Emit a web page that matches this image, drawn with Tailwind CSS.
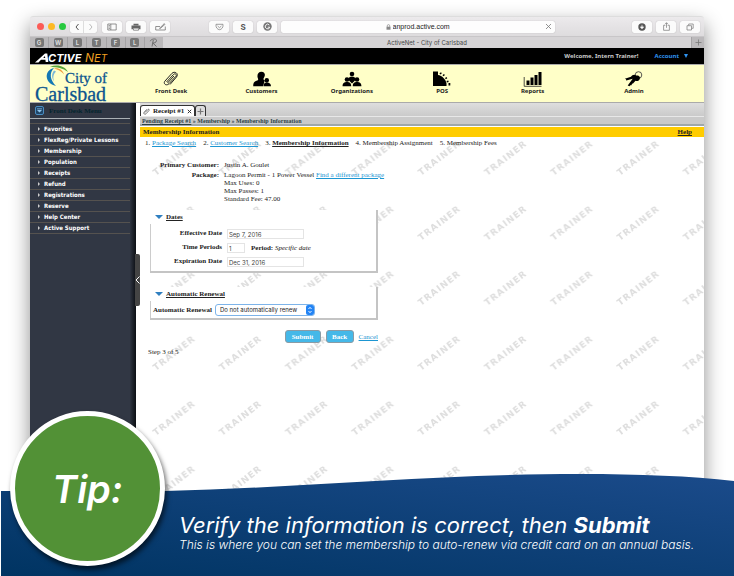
<!DOCTYPE html>
<html lang="en">
<head>
<meta charset="utf-8">
<meta name="viewport" content="width=device-width, initial-scale=1">
<title>ActiveNet - City of Carlsbad</title>
<script src="https://cdn.jsdelivr.net/npm/@tailwindcss/browser@4"></script>
</head>
<body class="bg-white">
<div class="relative flex min-h-screen flex-col overflow-hidden px-[30px] pt-4 font-['Liberation_Serif',serif] text-[7px] leading-[8px] text-[#222]">

  <!-- Browser window -->
  <div class="flex flex-1 flex-col rounded-t-[3px] bg-white shadow-[0_8px_20px_rgba(0,0,0,0.45)]">

    <!-- Toolbar -->
    <div class="flex h-5 items-center rounded-t-[3px] border-t border-[#ddd] bg-linear-to-b from-[#eceaec] to-[#dedcde] pr-1 pl-[7px] font-['Inter',sans-serif] text-[#555]">
      <div class="flex gap-1">
        <span class="size-[7px] rounded-full bg-[#fc5b57]"></span>
        <span class="size-[7px] rounded-full bg-[#fdb924]"></span>
        <span class="size-[7px] rounded-full bg-[#27c93f]"></span>
      </div>
      <div class="ml-1 flex h-3 w-[27px] shrink-0 divide-x divide-[#ddd] rounded-[2px] bg-[#fbfbfb] shadow-[0_0_1px_rgba(0,0,0,0.3)]">
        <button aria-label="Back" class="flex flex-1 items-center justify-center"><svg class="h-2 w-1" viewBox="0 0 4 8" fill="none" stroke="#555"><path d="M3.500 1 1 4l2.500 3"/></svg></button>
        <button aria-label="Forward" class="flex flex-1 items-center justify-center"><svg class="h-2 w-1" viewBox="0 0 4 8" fill="none" stroke="#bbb"><path d="M.5 1 3 4 .5 7"/></svg></button>
      </div>
      <button aria-label="Sidebar" class="ml-[5px] flex h-3 w-5 shrink-0 items-center justify-center rounded-[2px] bg-[#fbfbfb] shadow-[0_0_1px_rgba(0,0,0,0.3)]"><svg class="h-2 w-[10px]" viewBox="0 0 10 8" fill="none" stroke="#666" stroke-width=".7"><path d="M.8 1h8.400v6H.8zM3.800 1v6M1.700 2.500h1.200M1.700 4h1.200M1.700 5.500h1.200"/></svg></button>
      <button aria-label="Print" class="ml-1 flex h-3 w-5 shrink-0 items-center justify-center rounded-[2px] bg-[#fbfbfb] shadow-[0_0_1px_rgba(0,0,0,0.3)]"><svg class="h-2 w-[10px]" viewBox="0 0 10 8"><path d="M2.500.8h5v1.400h-5zM.5 2.600h9v3.600H8V5H2v1.200H.5z" fill="#666"/><path d="M2.500 5.200h5v2h-5z" fill="none" stroke="#666" stroke-width=".7"/></svg></button>
      <button aria-label="Sign" class="ml-1 flex h-3 w-5 shrink-0 items-center justify-center rounded-[2px] bg-[#fbfbfb] shadow-[0_0_1px_rgba(0,0,0,0.3)]"><svg class="h-2 w-[11px]" viewBox="0 0 11 8" fill="none" stroke="#666" stroke-width=".7"><path d="M5 3.500H.7v3.500h9.600V3.500M4.500 5.300 9.300.6l.7.7L5.200 5.600z"/></svg></button>
      <button aria-label="Pocket" class="ml-[39px] flex h-3 w-5 shrink-0 items-center justify-center rounded-[2px] bg-[#fbfbfb] shadow-[0_0_1px_rgba(0,0,0,0.3)]"><svg class="h-2 w-[9px]" viewBox="0 0 9 8" fill="none" stroke="#777" stroke-width=".7"><path d="M1 1.300h7c.5 3-1.500 5.400-3.500 5.400S.5 4.300 1 1.300zM2.600 3l1.900 1.700L6.400 3"/></svg></button>
      <button class="ml-1 h-3 w-5 shrink-0 rounded-[2px] bg-[#fbfbfb] text-[8px] leading-3 font-bold shadow-[0_0_1px_rgba(0,0,0,0.3)]">S</button>
      <button aria-label="Grammar" class="ml-1 flex h-3 w-5 shrink-0 items-center justify-center rounded-[2px] bg-[#fbfbfb] shadow-[0_0_1px_rgba(0,0,0,0.3)]"><svg class="size-[9px]" viewBox="0 0 9 9"><circle cx="4.500" cy="4.500" r="4.200" fill="#777"/><path d="M6.300 3a2.300 2.300 0 1 0 .5 2.200H4.800" fill="none" stroke="#fff" stroke-width=".9"/></svg></button>
      <label class="ml-1 flex h-3 min-w-0 flex-1 items-center rounded-[2px] bg-[#fdfdfd] pr-[3px] shadow-[0_0_1px_rgba(0,0,0,0.3)]">
        <span class="flex flex-1 items-center justify-center gap-[2px] pl-3">
          <svg class="h-[6px] w-[5px] shrink-0" viewBox="0 0 5 6"><path d="M.5 2.700h4V5.700h-4z" fill="#888"/><path d="M1.300 2.900V1.800a1.200 1.200 0 0 1 2.400 0v1.100" fill="none" stroke="#888" stroke-width=".7"/></svg>
          <input aria-label="Address" value="anprod.active.com" class="w-[60px] bg-transparent p-0 font-['Liberation_Sans',sans-serif] text-[7px] leading-3 text-[#222]">
        </span>
        <svg class="size-[7px]" viewBox="0 0 7 7" stroke="#777" stroke-width=".8"><path d="m1 1 5 5M6 1 1 6"/></svg>
      </label>
      <button aria-label="Downloads" class="ml-[77px] flex h-3 w-5 shrink-0 items-center justify-center rounded-[2px] bg-[#fbfbfb] shadow-[0_0_1px_rgba(0,0,0,0.3)]"><svg class="size-2" viewBox="0 0 8 8"><circle cx="4" cy="4" r="3.700" fill="#555"/><path d="M4 1.800v3M2.400 3.900 4 5.800l1.600-1.900z" fill="#fff" stroke="#fff" stroke-width=".7"/></svg></button>
      <button aria-label="Share" class="ml-1 flex h-3 w-5 shrink-0 items-center justify-center rounded-[2px] bg-[#fbfbfb] shadow-[0_0_1px_rgba(0,0,0,0.3)]"><svg class="size-[9px]" viewBox="0 0 9 9" fill="none" stroke="#777" stroke-width=".7"><path d="M3.300 3.300H1.600v5h5.800v-5H5.700M4.500 5.800V.8M3 2.200 4.500.7 6 2.200"/></svg></button>
      <button aria-label="Show tabs" class="ml-1 flex h-3 w-5 shrink-0 items-center justify-center rounded-[2px] bg-[#fbfbfb] shadow-[0_0_1px_rgba(0,0,0,0.3)]"><svg class="size-2" viewBox="0 0 8 8" fill="none" stroke="#777" stroke-width=".7"><path d="M1 2.700h4.500v4.300H1zM2.700 2.500V1h4.500v4.300H5.700"/></svg></button>
    </div>

    <!-- Tab strip -->
    <div class="flex h-3 border-t border-[#c8c6c8] bg-[#d6d4d6] font-['Inter',sans-serif] text-[6px] leading-[11px] text-[#444]">
      <div class="flex w-[133px] divide-x divide-[#a5a3a5] bg-[#bbb9bb]">
        <button class="flex flex-1 items-center justify-center"><span class="size-[9px] rounded-[2px] bg-[#777] leading-[9px] font-bold text-[#ddd]">G</span></button>
        <button class="flex flex-1 items-center justify-center"><span class="size-[9px] rounded-[2px] bg-[#777] leading-[9px] font-bold text-[#ddd]">W</span></button>
        <button class="flex flex-1 items-center justify-center"><span class="size-[9px] rounded-[2px] bg-[#777] leading-[9px] font-bold text-[#ddd]">L</span></button>
        <button class="flex flex-1 items-center justify-center"><span class="size-[9px] rounded-[2px] bg-[#777] leading-[9px] font-bold text-[#ddd]">T</span></button>
        <button class="flex flex-1 items-center justify-center"><span class="size-[9px] rounded-[2px] bg-[#777] leading-[9px] font-bold text-[#ddd]">F</span></button>
        <button class="flex flex-1 items-center justify-center"><span class="size-[9px] rounded-[2px] bg-[#777] leading-[9px] font-bold text-[#ddd]">L</span></button>
        <button aria-label="R" class="flex flex-1 items-center justify-center"><svg class="size-[9px]" viewBox="0 0 9 9" fill="none" stroke="#666" stroke-width=".9"><path d="M1.200 3.200C2 .8 7.500 0 7.500 2.500S4.500 5 3.800 5L7.500 8.500M4.300 2 3 8.500"/></svg></button>
      </div>
      <div class="flex-1 pl-[53px] text-center">ActiveNet - City of Carlsbad</div>
      <button aria-label="New tab" class="ml-[53px] flex w-[13px] items-center justify-center border-l border-[#a5a3a5] bg-[#bbb9bb]"><svg class="size-[7px]" viewBox="0 0 7 7" stroke="#777" stroke-width=".8"><path d="M3.500.5v6M.5 3.500h6"/></svg></button>
    </div>

    <!-- Brand bar -->
    <div class="flex h-[17px] items-center border-b border-[#aaa] bg-black pr-4 font-['Noto_Sans',sans-serif] text-[6px] font-bold text-[#ccc]">
      <svg class="ml-[5px] h-4 w-[78px]" viewBox="0 0 78 16" role="img" aria-label="ActiveNet">
        <path d="M0 14.500 10 5.500h2.300l1 8.500h-2.600l-.3-2.200H6L3.500 14.500zM8.200 10h2l-.3-2z" fill="#fff" fill-rule="evenodd"/>
        <text x="13" y="14" fill="#fff" font-family="Inter, sans-serif" font-weight="700" font-style="italic" font-size="11">CTIVE</text>
        <text x="50" y="14" fill="#f0a020" font-family="Inter, sans-serif" font-weight="400" font-style="italic" font-size="12">N<tspan font-size="11">E</tspan><tspan font-size="10">T</tspan></text>
      </svg>
      <span class="ml-auto">Welcome, Intern Trainer!</span>
      <a href="#" class="ml-4 flex items-center gap-[5px] text-[#2f93f0]">Account <svg class="size-1" viewBox="0 0 4 4" fill="#2f93f0"><path d="M0 0h4L2 4z"/></svg></a>
    </div>

    <!-- Main navigation -->
    <div class="flex h-[37px] bg-[#ffffc8]">
      <svg class="h-[37px] w-24 shrink-0 overflow-visible" viewBox="0 0 96 37" role="img" aria-label="City of Carlsbad">
        <path d="M24 3C14 5 14 18 26 21 20 15 19 8 24 3z" fill="#1478b4"/>
        <path d="M20 2c7-3 15-1 18 5-5-4-11-5-18-5z" fill="#5aa53c"/>
        <path d="M24 3.500c5-1 9 2 10 6-2-3-6-5-10-6z" fill="#f09a3c"/>
        <path d="M24 5.500c-3 4-2 8 0 11-1-4-1-7 2-10z" fill="#7ab8d8"/>
        <g fill="#0b558f" stroke="#0b558f" stroke-width=".3" font-family="'Liberation Serif', serif">
          <text x="35" y="18" font-size="15">City of</text>
          <text x="5" y="36" font-size="20">Carlsbad</text>
        </g>
      </svg>
      <nav class="grid flex-1 grid-cols-[91fr_91fr_91fr_91fr_91fr_113fr] pr-[14px] text-center font-['Noto_Sans',sans-serif] text-[6px] font-bold">
        <a href="#" class="flex flex-col items-center pt-[6px]"><svg class="h-4 w-5" viewBox="0 0 20 16" fill="none" stroke="#222" stroke-width="1"><path d="m5.500 11 7-7.500c1.600-1.600 3.800 0 2.400 1.800L8 12.700c-2.600 2.700-6.300 0-4-2.700L11 2.300c2.600-2.600 7.200.2 4.500 3.700L9 13.500M6.500 12 13 5"/></svg>Front Desk</a>
        <a href="#" class="flex flex-col items-center pt-[6px]"><svg class="h-4 w-5" viewBox="0 0 20 16" fill="#000"><path d="M9.500.8c3 0 4 2.500 3 4.700-.5 1.500-1.200 2-1 3l1.300 1-1.800 5.800H1.200c0-4 1-4.800 4.600-6 .7-.8.2-1.500-.1-2.500C4.800 3.500 6.300.8 9.500.8z"/><circle cx="14.800" cy="9.200" r="2.200"/><path d="M11.500 15.300c.2-3 1-3.300 3.300-4 2.700.6 4 1.200 4.200 4z"/></svg>Customers</a>
        <a href="#" class="flex flex-col items-center pt-[6px]"><svg class="h-4 w-5" viewBox="0 0 20 16" fill="#000"><circle cx="10" cy="3" r="2.300"/><path d="M6.500 9c0-3 1.500-3 3.500-3.500 2 .5 3.500.5 3.500 3.500L10 12.500z"/><circle cx="5" cy="8.500" r="2.300"/><circle cx="15" cy="8.500" r="2.300"/><path d="M.6 15.300c0-3.500 1.600-3.800 4.400-4.500 2.800.7 4.200 1 4.200 4.500zM10.800 15.300c0-3.500 1.400-3.800 4.200-4.500 2.800.7 4.400 1 4.400 4.500z"/></svg>Organizations</a>
        <a href="#" class="flex flex-col items-center pt-[6px]"><svg class="h-4 w-5" viewBox="0 0 20 16" fill="#000"><path d="M1 .5h5v3.500c4 .5 8 4.500 8.500 8.500v2.500H1zM7.500 2.200l1.600-1 .7 1.200-1.600 1zM10.500 4.200l1.400-1.200 1 1-1.300 1.300zM13 7l1.500-1 .8 1.300-1.500.9zM14.500 10l1.800-.6.4 1.500-1.700.5zM16.500 12h1.800v2.500h-1.800z"/></svg>POS</a>
        <a href="#" class="flex flex-col items-center pt-[6px]"><svg class="h-4 w-5" viewBox="0 0 20 16"><path d="M1.200 6v9.300H18.500" fill="none" stroke="#222" stroke-width=".8"/><path d="M3.500 9.500h3v4.500h-3zM7.500 6.500h3V14h-3zM11.500 4h3v10h-3zM15.500 1h3v13h-3z" fill="#000"/></svg>Reports</a>
        <a href="#" class="flex flex-col items-center pt-[6px]"><svg class="h-4 w-5" viewBox="0 0 20 16"><circle cx="14.500" cy="4" r="3.300" fill="none" stroke="#444" stroke-width=".9"/><path d="M12 4.500c3-.5 5 1.500 3.500 4-1 1.500-2.500 1.800-4 1.200L9 12.500l-1 .2-.5 1.500-1.200 0-.8 1-1.800-.6 5-6.800-6.500 1.700-.2-1.200L.8 7.800 7 5.800C8 3.500 11 3 12 4.500z" fill="#000"/></svg>Admin</a>
      </nav>
    </div>

    <div class="flex flex-1 border-t border-[#aaa]">
      <!-- Sidebar -->
      <aside class="relative w-[106px] shrink-0 bg-[#313744] bg-linear-to-r from-[#313744] from-94% to-[#0c0f14] pr-[6px] font-['DejaVu_Sans_Condensed','DejaVu_Sans',sans-serif] text-[6px] font-bold text-white">
        <div class="flex h-4 items-center gap-[5px] border-b border-[#aab0b5] pl-[5px] font-['Liberation_Serif',serif] text-[7px] text-[#04252e]">
          <svg class="size-[9px]" viewBox="0 0 9 9"><rect x=".5" y=".5" width="8" height="8" rx="1.500" fill="#1f4568" stroke="#4b8ec2"/><path d="M2 4h5L4.500 6.500zM2 2.500h5v.7H2z" fill="#8fc4ea"/></svg>
          Front Desk Menu
        </div>
        <ul class="border-b border-[#55524f] pt-1 leading-[10px]">
          <li class="border-t border-[#55524f]"><a href="#" class="flex items-center gap-1 pl-2"><svg class="h-1 w-[2px]" viewBox="0 0 2 4" fill="#ccc"><path d="M0 0v4l2-2z"/></svg>Favorites</a></li>
          <li class="border-t border-[#55524f]"><a href="#" class="flex items-center gap-1 pl-2 whitespace-nowrap"><svg class="h-1 w-[2px] shrink-0" viewBox="0 0 2 4" fill="#ccc"><path d="M0 0v4l2-2z"/></svg>FlexReg/Private Lessons</a></li>
          <li class="border-t border-[#55524f]"><a href="#" class="flex items-center gap-1 pl-2"><svg class="h-1 w-[2px]" viewBox="0 0 2 4" fill="#ccc"><path d="M0 0v4l2-2z"/></svg>Membership</a></li>
          <li class="border-t border-[#55524f]"><a href="#" class="flex items-center gap-1 pl-2"><svg class="h-1 w-[2px]" viewBox="0 0 2 4" fill="#ccc"><path d="M0 0v4l2-2z"/></svg>Population</a></li>
          <li class="border-t border-[#55524f]"><a href="#" class="flex items-center gap-1 pl-2"><svg class="h-1 w-[2px]" viewBox="0 0 2 4" fill="#ccc"><path d="M0 0v4l2-2z"/></svg>Receipts</a></li>
          <li class="border-t border-[#55524f]"><a href="#" class="flex items-center gap-1 pl-2"><svg class="h-1 w-[2px]" viewBox="0 0 2 4" fill="#ccc"><path d="M0 0v4l2-2z"/></svg>Refund</a></li>
          <li class="border-t border-[#55524f]"><a href="#" class="flex items-center gap-1 pl-2"><svg class="h-1 w-[2px]" viewBox="0 0 2 4" fill="#ccc"><path d="M0 0v4l2-2z"/></svg>Registrations</a></li>
          <li class="border-t border-[#55524f]"><a href="#" class="flex items-center gap-1 pl-2"><svg class="h-1 w-[2px]" viewBox="0 0 2 4" fill="#ccc"><path d="M0 0v4l2-2z"/></svg>Reserve</a></li>
          <li class="border-t border-[#55524f]"><a href="#" class="flex items-center gap-1 pl-2"><svg class="h-1 w-[2px]" viewBox="0 0 2 4" fill="#ccc"><path d="M0 0v4l2-2z"/></svg>Help Center</a></li>
          <li class="border-t border-[#55524f]"><a href="#" class="flex items-center gap-1 pl-2"><svg class="h-1 w-[2px]" viewBox="0 0 2 4" fill="#ccc"><path d="M0 0v4l2-2z"/></svg>Active Support</a></li>
        </ul>
        <button aria-label="Collapse menu" class="absolute top-[151px] left-[105px] z-10 flex h-[52px] w-[5px] items-center rounded-r-[2px] bg-[#444]"><svg class="h-2 w-[5px]" viewBox="0 0 5 8" fill="none" stroke="#fff"><path d="M4.500.5 1 4l3.500 3.500"/></svg></button>
      </aside>

      <!-- Content -->
      <main class="flex min-w-0 flex-1 flex-col pl-1">
        <div class="flex h-[13px] items-end bg-linear-to-b from-[#dedede] to-[#cacaca] font-bold">
          <button class="flex h-[11px] items-center gap-[3px] rounded-t-[3px] border border-b-0 border-[#333] bg-white px-[2px]"><svg class="size-[7px]" viewBox="0 0 7 7" fill="none" stroke="#444" stroke-width=".7"><path d="m2 4.500 3-3c.8-.7 1.700.2 1 1L3 5.800c-1.200 1.200-3-.3-1.800-1.600L4 1.200"/></svg>Receipt #1 <svg class="size-[5px]" viewBox="0 0 5 5" stroke="#333"><path d="m.8.8 3.400 3.400M4.200.8.8 4.200"/></svg></button>
          <button aria-label="Add receipt" class="flex h-[11px] w-[11px] items-center justify-center rounded-t-[3px] border border-b-0 border-[#333] bg-[#ddd]"><svg class="size-[7px]" viewBox="0 0 7 7" stroke="#777" stroke-width="1.200"><path d="M3.500.5v6M.5 3.500h6"/></svg></button>
        </div>
        <div class="h-[10px] border-t border-b-2 border-t-[#e8e8e8] border-b-[#9fa8aa] bg-[#cacaca] pl-[2px] text-[6px] leading-[8px] font-bold text-[#2b4146]"><a href="#" class="underline">Pending Receipt #1</a> » Membership » Membership Information</div>
        <div class="mt-px flex h-[10px] items-center justify-between bg-[#fc0] pr-3 pl-[3px] font-bold"><h1>Membership Information</h1><a href="#" class="underline">Help</a></div>

        <div class="relative flex-1">
          <!-- Trainer watermark -->
          <svg class="absolute inset-0 size-full" aria-hidden="true">
            <defs><pattern id="mark" x="9" y="-14" width="66.300" height="65" patternUnits="userSpaceOnUse"><text transform="translate(7 53) rotate(-38)" font-family="'DejaVu Sans', sans-serif" font-weight="700" font-size="9" letter-spacing="1" fill="#dedede">TRAINER</text></pattern></defs>
            <rect width="100%" height="100%" fill="url(#mark)"/>
          </svg>

          <div class="relative px-[5px] pt-[2px]">
            <ol class="flex gap-[7px]">
              <li>1. <a href="#" class="text-[#1d96d2] underline">Package Search</a></li>
              <li>2. <a href="#" class="text-[#1d96d2] underline">Customer Search</a></li>
              <li>3. <b class="underline">Membership Information</b></li>
              <li>4. Membership Assignment</li>
              <li>5. Membership Fees</li>
            </ol>

            <dl class="mt-[14px] grid grid-cols-[74px_1fr] gap-x-[5px] gap-y-[2px]">
              <dt class="text-right font-bold">Primary Customer:</dt>
              <dd>Justin A. Goulet</dd>
              <dt class="text-right font-bold">Package:</dt>
              <dd>Lagoon Permit - 1 Power Vessel <a href="#" class="text-[#1d96d2] underline">Find a different package</a><br>Max Uses: 0<br>Max Passes: 1<br>Standard Fee: 47.00</dd>
            </dl>

            <form class="w-[233px] pl-[5px]">
              <section class="mt-[7px] border-r-2 border-b-2 border-[#c4c4c4] bg-white">
                <h2 class="flex h-[14px] items-center gap-[3px] pl-[5px] font-bold"><svg class="h-1 w-2" viewBox="0 0 8 4" fill="#2f7fc0"><path d="M0 0h8L4 4z"/></svg><span class="underline">Dates</span></h2>
                <div class="grid grid-cols-[71px_1fr] items-start gap-x-[5px] gap-y-1 border-l border-[#ccc] pt-[5px] pb-1">
                  <label for="eff" class="text-right font-bold">Effective Date</label>
                  <input id="eff" value="Sep 7, 2016" class="h-[10px] w-[77px] border border-[#e4e4e4] bg-white px-px font-['Inter',sans-serif] text-[6px] leading-[8px] text-[#444]">
                  <label for="per" class="text-right font-bold">Time Periods</label>
                  <div class="flex items-center gap-[6px]"><input id="per" value="1" class="h-[10px] w-[18px] border border-[#e4e4e4] bg-white px-px font-['Inter',sans-serif] text-[6px] leading-[8px] text-[#444]"><span><b>Period:</b> <i>Specific date</i></span></div>
                  <label for="exp" class="text-right font-bold">Expiration Date</label>
                  <input id="exp" value="Dec 31, 2016" class="h-[10px] w-[77px] border border-[#e4e4e4] bg-white px-px font-['Inter',sans-serif] text-[6px] leading-[8px] text-[#444]">
                </div>
              </section>

              <section class="mt-[14px] border-r-2 border-b-2 border-[#c4c4c4] bg-white">
                <h2 class="flex h-[14px] items-center gap-[3px] pl-[5px] font-bold"><svg class="h-1 w-2" viewBox="0 0 8 4" fill="#2f7fc0"><path d="M0 0h8L4 4z"/></svg><span class="underline">Automatic Renewal</span></h2>
                <div class="flex items-center gap-[3px] border-l border-[#ccc] pt-[3px] pb-[2px] pl-[2px]">
                  <label for="renew" class="font-bold">Automatic Renewal</label>
                  <div class="relative">
                    <select id="renew" class="block h-3 w-[100px] appearance-none rounded-[3px] border border-[#7db4ea] bg-white pl-1 font-['Inter',sans-serif] text-[6px] leading-[10px] text-[#222]"><option>Do not automatically renew</option></select>
                    <svg class="pointer-events-none absolute top-px right-px h-[10px] w-2" viewBox="0 0 8 10"><rect width="8" height="10" rx="2" fill="#2384f5"/><path d="M2.500 4 4 2.300 5.500 4M2.500 6 4 7.700 5.500 6" fill="none" stroke="#fff" stroke-width=".9"/></svg>
                  </div>
                </div>
              </section>

              <div class="mt-[10px] flex items-center justify-end gap-[5px]">
                <button type="button" class="h-[13px] w-9 rounded-[3px] border border-[#8a9ba5] bg-[#45b8e8] font-bold text-white">Submit</button>
                <button type="button" class="h-[13px] w-7 rounded-[3px] border border-[#8a9ba5] bg-[#45b8e8] font-bold text-white">Back</button>
                <a href="#" class="text-[#1d96d2] underline">Cancel</a>
              </div>
            </form>
            <p class="mt-[5px] pl-[3px]">Step 3 of 5</p>
          </div>
        </div>
      </main>
    </div>
  </div>

  <!-- Tip banner laid over the window -->
  <footer class="absolute inset-x-0 bottom-0 z-20 h-[102px] pl-px font-['Inter',sans-serif] text-white italic">
    <svg class="absolute inset-0 size-full" viewBox="0 0 734 102" preserveAspectRatio="none" aria-hidden="true">
      <defs><linearGradient id="sea" x1="0" y1="1" x2="1" y2="0"><stop stop-color="#003462"/><stop offset="1" stop-color="#1b4b8b"/></linearGradient></defs>
      <path d="M1 17H165C300 14 430 0 580 0c60 0 110 2 154 7v95H1z" fill="url(#sea)"/>
    </svg>
    <div class="absolute bottom-[10px] left-[10px] flex size-[155px] items-center justify-center rounded-full border-[5px] border-white bg-[#529136] text-[38px] font-semibold shadow-[2px_4px_5px_rgba(0,0,0,0.6)]">Tip:</div>
    <div class="relative pt-[39px] pl-[178px] whitespace-nowrap">
      <p class="text-[22px] leading-6 font-normal">Verify the information is correct, then <b>Submit</b></p>
      <p class="text-[12px] leading-[15px] font-light">This is where you can set the membership to auto-renew via credit card on an annual basis.</p>
    </div>
  </footer>
</div>
</body>
</html>
